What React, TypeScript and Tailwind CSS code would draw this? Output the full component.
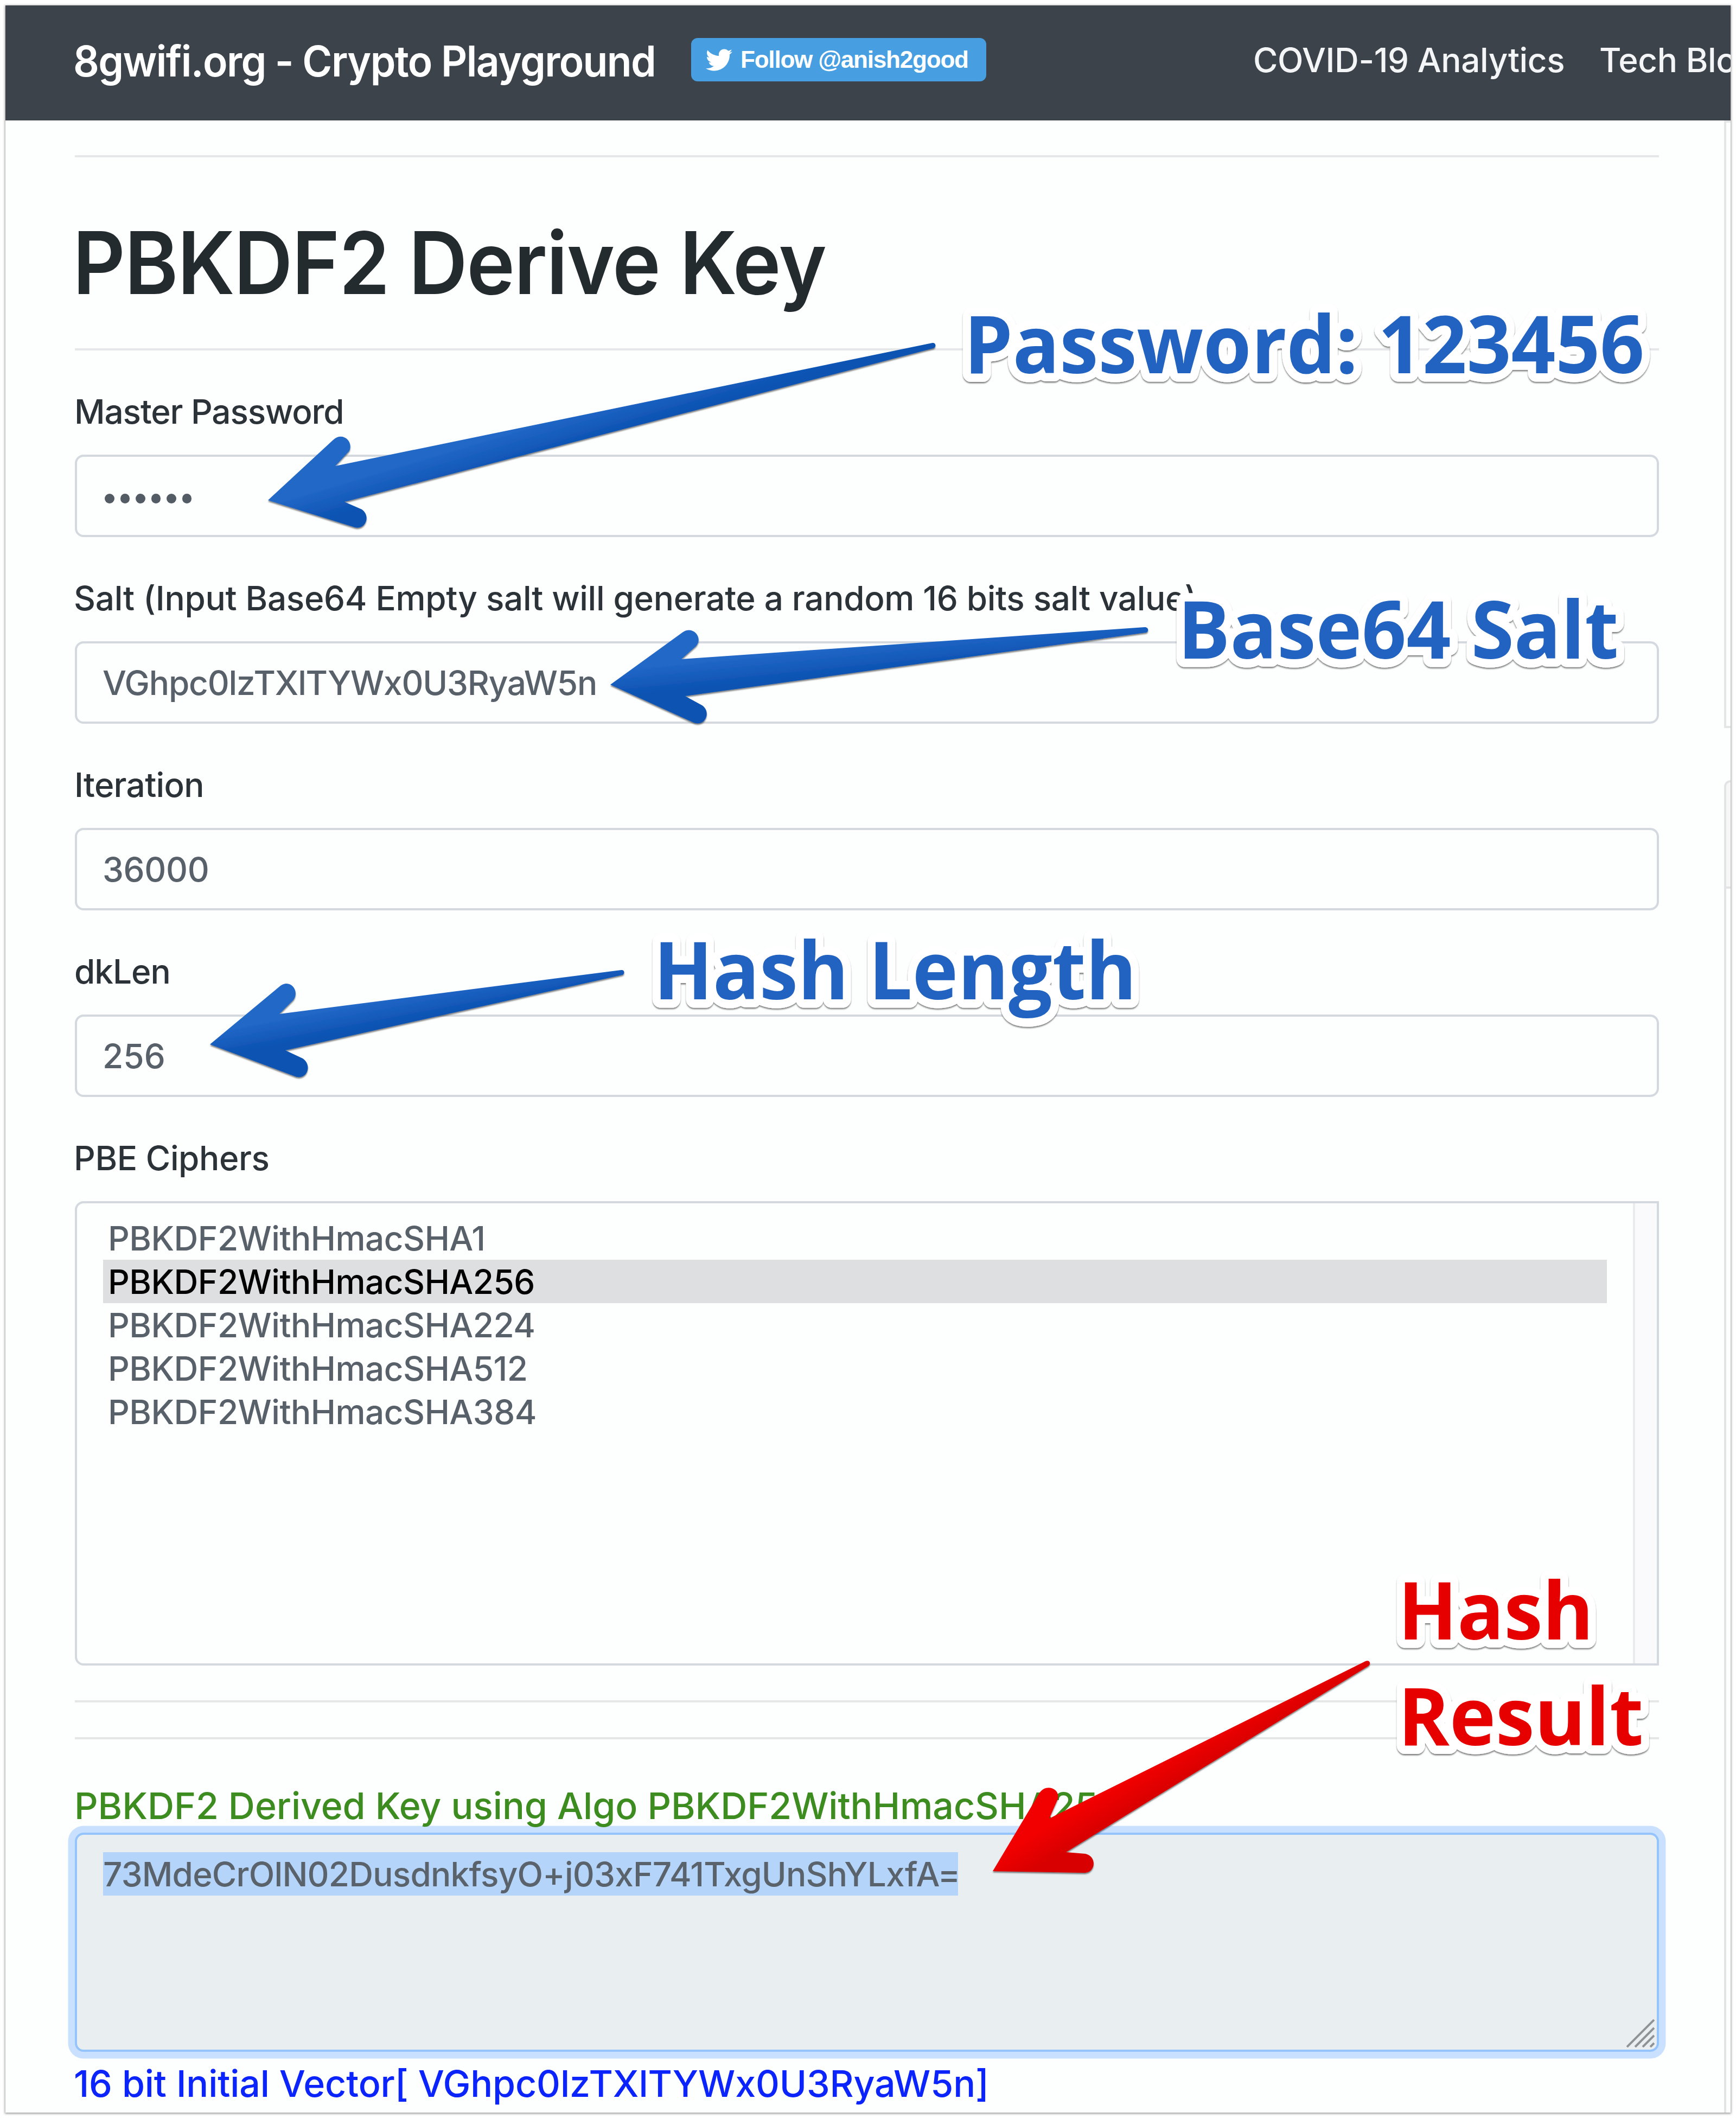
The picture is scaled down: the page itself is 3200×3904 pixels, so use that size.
import type { ReactNode } from "react";
import { FaTwitter } from "react-icons/fa";

const ciphers = [
  { name: "PBKDF2WithHmacSHA1", selected: false },
  { name: "PBKDF2WithHmacSHA256", selected: true },
  { name: "PBKDF2WithHmacSHA224", selected: false },
  { name: "PBKDF2WithHmacSHA512", selected: false },
  { name: "PBKDF2WithHmacSHA384", selected: false },
];

function Navbar() {
  return (
    <header className="flex h-[212px] items-start overflow-hidden bg-[#3d434b] pl-[125px] whitespace-nowrap text-white">
      <div className="mt-[43px] w-[1139px] shrink-0 origin-left scale-x-[0.96] text-[78px] leading-[120px] font-semibold tracking-[-1.68px]">
        8gwifi.org - Crypto Playground
      </div>
      <a className="mt-[60px] flex h-[80px] w-[544px] shrink-0 items-center rounded-[12px] bg-[#479fe1] pl-[27px]">
        <FaTwitter className="size-[49px]" />
        <span className="ml-[15px] font-['Liberation_Sans',sans-serif] text-[44px] leading-[80px] font-bold tracking-[-1.2px]">
          Follow @anish2good
        </span>
      </a>
      <nav className="mt-[53px] ml-[492px] flex text-[62px] leading-[96px] font-medium tracking-[-0.4px] text-[#f4f5f6]">
        <a className="w-[638px] shrink-0">COVID-19 Analytics</a>
        <a className="shrink-0">Tech Blog</a>
      </nav>
    </header>
  );
}

function Rule({ className }: { className: string }) {
  return <div className={`h-[4px] shrink-0 ${className}`} />;
}

function Field({ label, labelClass = "", children }: { label: string; labelClass?: string; children: ReactNode }) {
  return (
    <div className="mb-[64px]">
      <div className={`mb-[32px] h-[96px] pt-px text-[62px] leading-[96px] whitespace-nowrap text-[#2b3238] ${labelClass}`}>{label}</div>
      <div className="flex h-[152px] items-center rounded-[16px] border-[4px] border-[#d3d9de] px-[47px] pt-[2px] text-[62px] leading-[96px] text-[#586169]">
        {children}
      </div>
    </div>
  );
}

function CipherList() {
  return (
    <div>
      <div className="mb-[32px] -ml-[2px] h-[96px] pt-px text-[62px] leading-[96px] tracking-[-0.4px] text-[#2b3238]">PBE Ciphers</div>
      <div className="flex h-[856px] justify-between rounded-l-[16px] border-[4px] border-[#d3d9de]">
        <ul className="mt-[24px] ml-[48px] w-[2772px] text-[62px] tracking-[-0.5px]">
          {ciphers.map((c) => (
            <li
              key={c.name}
              className={
                c.selected
                  ? "h-[80px] bg-[#dedfe1] pl-[9px] leading-[81px] text-black"
                  : "h-[80px] pl-[9px] leading-[81px] text-[#586169]"
              }
            >
              {c.name}
            </li>
          ))}
        </ul>
        <div className="w-[44px] border-l-[4px] border-[#e9ebec] bg-[#fafafc]" />
      </div>
    </div>
  );
}

function Result() {
  return (
    <div className="mt-[66px] whitespace-nowrap">
      <div className="relative z-10 -ml-[1px] h-[106px] pt-[3px] text-[68px] leading-[106px] tracking-[-0.05px] text-[#3c8c1f]">
        PBKDF2 Derived Key using Algo PBKDF2WithHmacSHA256
      </div>
      <div className="relative h-[404px] rounded-[16px] border-[4px] border-[#94c4fb] bg-[#e9eef1] pt-[32px] pl-[48px] shadow-[0_0_0_12.5px_#c9e1ff]">
        <span className="block h-[80px] w-[1576px] bg-[#b4d4fa] text-[62px] leading-[81px] tracking-[-0.75px] text-[#5a636b]">
          73MdeCrOlN02DusdnkfsyO+j03xF741TxgUnShYLxfA=
        </span>
        <svg className="absolute right-[4px] bottom-[4px]" width="52" height="52" viewBox="0 0 52 52" fill="none" stroke="#8f9396" strokeWidth="4">
          <path d="M1 51 51 1M16 51 51 16M30 51 51 30M44 51 51 44" />
        </svg>
      </div>
      <div className="mt-[5px] -ml-[2px] text-[68px] leading-[106px] tracking-[-0.1px] text-[#0b24fb]">
        16 bit Initial Vector[ VGhpc0lzTXlTYWx0U3RyaW5n]
      </div>
    </div>
  );
}

/** Left edges of the cards in the next column, cut off by the window. */
function Sidebar() {
  return (
    <aside className="flex w-[12px] shrink-0 flex-col">
      <div className="h-[1120px] border-y-[4px] border-l-[4px] border-[#e4e6e7]" />
      <div className="mt-[96px] h-[200px] rounded-tl-[14px] border-y-[4px] border-l-[4px] border-[#e2e4e5] bg-[#f7f7f8]" />
      <div className="flex-1 border-l-[4px] border-[#e2e4e5]" />
    </aside>
  );
}

function Annotations() {
  return (
    <svg className="absolute inset-0 z-20" width="3200" height="3904" viewBox="0 0 3200 3904">
      <defs>
        <linearGradient id="blueA" gradientUnits="userSpaceOnUse" x1="855" y1="800" x2="885" y2="900">
          <stop offset="0.2" stopColor="#2167c7" />
          <stop offset="0.75" stopColor="#0c52b2" />
        </linearGradient>
        <linearGradient id="blueB" gradientUnits="userSpaceOnUse" x1="1400" y1="1190" x2="1409" y2="1280">
          <stop offset="0.2" stopColor="#2167c7" />
          <stop offset="0.75" stopColor="#0c52b2" />
        </linearGradient>
        <linearGradient id="blueC" gradientUnits="userSpaceOnUse" x1="600" y1="1845" x2="616" y2="1930">
          <stop offset="0.2" stopColor="#2167c7" />
          <stop offset="0.75" stopColor="#0c52b2" />
        </linearGradient>
        <linearGradient id="redA" gradientUnits="userSpaceOnUse" x1="2100" y1="3245" x2="2150" y2="3330">
          <stop offset="0.2" stopColor="#f20505" />
          <stop offset="0.75" stopColor="#d80000" />
        </linearGradient>
        <filter id="lift" x="-10%" y="-10%" width="120%" height="125%">
          <feDropShadow dx="0" dy="2.5" stdDeviation="1" floodColor="#000" floodOpacity="0.5" />
        </filter>
      </defs>
      <g filter="url(#lift)">
        <path
          fill="url(#blueA)"
          d="M494 922 L614 811 C630 795 652 812 644 831 L618 859 L1719 632 C1726 631 1726 641 1720 642 L635 925 L667 939 C684 951 674 977 654 972 Z"
        />
        <path
          fill="url(#blueB)"
          d="M1125 1262 L1259 1165 C1277 1153 1297 1175 1283 1191 L1256 1215 L2110 1156 C2118 1156 2118 1165 2112 1166 L1263 1283 L1294 1300 C1312 1312 1300 1340 1279 1332 Z"
        />
        <path
          fill="url(#blueC)"
          d="M387 1925 L517 1817 C535 1804 553 1826 541 1843 L515 1869 L1145 1788 C1152 1787 1152 1796 1147 1797 L526 1936 L558 1951 C577 1964 565 1992 544 1984 Z"
        />
        <path
          fill="url(#redA)"
          d="M1830 3449 L1916 3305 C1928 3286 1957 3297 1949 3318 L1934 3352 L2517 3062 C2525 3059 2528 3067 2522 3071 L1965 3414 L2001 3417 C2022 3422 2020 3451 2000 3452 Z"
        />
      </g>
      <g
        filter="url(#lift)"
        fontFamily="'Open Sans', 'Noto Sans', sans-serif"
        fontWeight="700"
        fontSize="148"
        stroke="#fff"
        strokeWidth="31"
        strokeLinejoin="round"
        style={{ paintOrder: "stroke" }}
      >
        <text transform="translate(1777 688) scale(0.967 1)" fill="#2163c1">Password: 123456</text>
        <text transform="translate(2171 1214) scale(0.97 1)" fill="#2163c1">Base64 Salt</text>
        <text transform="translate(1205 1842) scale(0.962 1)" fill="#2163c1">Hash Length</text>
        <text transform="translate(2577 3022) scale(0.965 1)" fill="#e60202">Hash</text>
        <text transform="translate(2577 3217) scale(0.972 1)" fill="#e60202">Result</text>
      </g>
    </svg>
  );
}

export default function App() {
  return (
    <div className="relative h-[3904px] w-[3200px] overflow-hidden bg-white p-[10px] font-['Inter',sans-serif]">
      <div className="flex h-[3884px] flex-col overflow-hidden bg-[#fdfefe] shadow-[0_1px_4px_1px_rgba(0,0,0,0.4)]">
        <Navbar />
        <div className="flex min-h-0 flex-1 font-medium">
          <main className="mr-[120px] ml-[128px] flex w-[2920px] shrink-0 flex-col">
            <Rule className="mt-[64px] bg-[#e5e7e9]" />
            <h1 className="mt-[98px] mb-[62px] -ml-[4px] origin-left scale-x-[0.945] text-[159px] leading-[192px] font-semibold tracking-[-1.6px] text-[#242b2f]">
              PBKDF2 Derive Key
            </h1>
            <Rule className="mb-[64px] bg-[#e5e7e9]" />
            <Field label="Master Password" labelClass="-ml-[1px] tracking-[-1.1px]">
              <span className="flex gap-[11px] pt-[8px] pl-[4px]">
                {[0, 1, 2, 3, 4, 5].map((i) => (
                  <i key={i} className="size-[17.5px] rounded-full bg-[#535c64]" />
                ))}
              </span>
            </Field>
            <Field label="Salt (Input Base64 Empty salt will generate a random 16 bits salt value)" labelClass="-ml-[2px] tracking-[-0.3px]">
              <span className="tracking-[-1.15px]">VGhpc0lzTXlTYWx0U3RyaW5n</span>
            </Field>
            <Field label="Iteration" labelClass="-ml-[1px] tracking-[-0.7px]">
              <span className="tracking-[-0.3px]">36000</span>
            </Field>
            <Field label="dkLen" labelClass="-ml-[1px] tracking-[-1px]">
              <span className="tracking-[0.1px]">256</span>
            </Field>
            <CipherList />
            <Rule className="mt-[64px] bg-[#e5e7e7]" />
            <Rule className="mt-[64px] bg-[#e5e7e7]" />
            <Result />
          </main>
          <Sidebar />
        </div>
      </div>
      <Annotations />
    </div>
  );
}
